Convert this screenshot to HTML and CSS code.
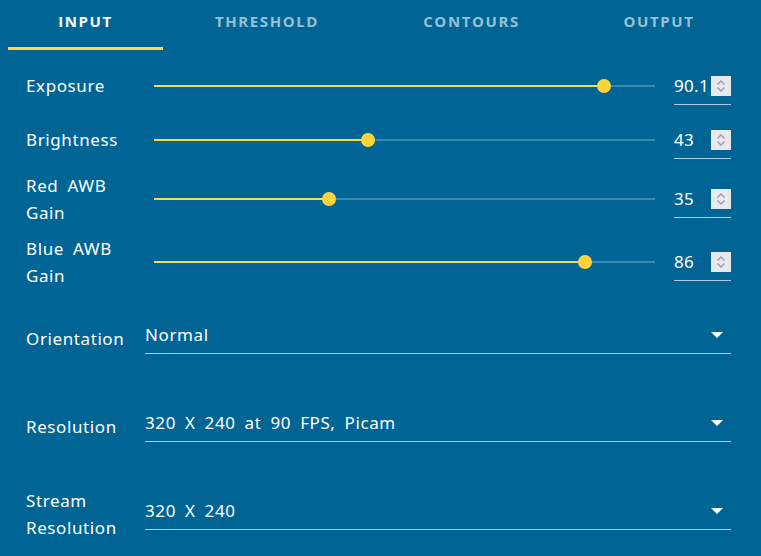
FILE: index.html
```html
<!DOCTYPE html>
<html>
<head>
<meta charset="utf-8">
<link rel="stylesheet" href="styles.css">
</head>
<body>
<div class="page">
  <nav class="tabs">
    <div class="tab active">Input</div>
    <div class="tab">Threshold</div>
    <div class="tab">Contours</div>
    <div class="tab">Output</div>
  </nav>
  <div class="content">
    <div class="row r1">
      <div class="label">Exposure</div>
      <div class="slider"><div class="track"><div class="fill" style="width:89.8%"></div><div class="thumb" style="left:89.8%"></div></div></div>
      <div class="num"><span class="val">90.1</span><span class="spin"><svg width="20" height="20" viewBox="0 0 20 20"><path d="M6.5 8.5 L10 5 L13.5 8.5 M6.5 11.5 L10 15 L13.5 11.5" fill="none" stroke="#9b9aa8" stroke-width="1.3"/></svg></span></div>
    </div>
    <div class="row r2">
      <div class="label">Brightness</div>
      <div class="slider"><div class="track"><div class="fill" style="width:42.7%"></div><div class="thumb" style="left:42.7%"></div></div></div>
      <div class="num"><span class="val">43</span><span class="spin"><svg width="20" height="20" viewBox="0 0 20 20"><path d="M6.5 8.5 L10 5 L13.5 8.5 M6.5 11.5 L10 15 L13.5 11.5" fill="none" stroke="#9b9aa8" stroke-width="1.3"/></svg></span></div>
    </div>
    <div class="row r3">
      <div class="label two">Red AWB<br>Gain</div>
      <div class="slider"><div class="track"><div class="fill" style="width:35%"></div><div class="thumb" style="left:35%"></div></div></div>
      <div class="num"><span class="val">35</span><span class="spin"><svg width="20" height="20" viewBox="0 0 20 20"><path d="M6.5 8.5 L10 5 L13.5 8.5 M6.5 11.5 L10 15 L13.5 11.5" fill="none" stroke="#9b9aa8" stroke-width="1.3"/></svg></span></div>
    </div>
    <div class="row r4">
      <div class="label two">Blue AWB<br>Gain</div>
      <div class="slider"><div class="track"><div class="fill" style="width:86%"></div><div class="thumb" style="left:86%"></div></div></div>
      <div class="num"><span class="val">86</span><span class="spin"><svg width="20" height="20" viewBox="0 0 20 20"><path d="M6.5 8.5 L10 5 L13.5 8.5 M6.5 11.5 L10 15 L13.5 11.5" fill="none" stroke="#9b9aa8" stroke-width="1.3"/></svg></span></div>
    </div>
    <div class="srow first">
      <div class="slabel">Orientation</div>
      <div class="select"><span class="stext">Normal</span><svg class="arrow" width="12" height="6" viewBox="0 0 12 6"><path d="M0 0 H12 L6 6 Z" fill="#fff"/></svg></div>
    </div>
    <div class="srow">
      <div class="slabel">Resolution</div>
      <div class="select"><span class="stext">320 X 240 at 90 FPS, Picam</span><svg class="arrow" width="12" height="6" viewBox="0 0 12 6"><path d="M0 0 H12 L6 6 Z" fill="#fff"/></svg></div>
    </div>
    <div class="srow">
      <div class="slabel two">Stream<br>Resolution</div>
      <div class="select"><span class="stext">320 X 240</span><svg class="arrow" width="12" height="6" viewBox="0 0 12 6"><path d="M0 0 H12 L6 6 Z" fill="#fff"/></svg></div>
    </div>
  </div>
</div>
</body>
</html>
```

FILE: styles.css
```css
* { box-sizing: border-box; }
html, body { margin: 0; padding: 0; }
body {
  background: #006595;
  width: 761px;
  height: 556px;
  overflow: hidden;
  font-family: "Noto Sans", sans-serif;
  color: #fff;
}
.tabs {
  display: grid;
  grid-template-columns: 155px 208px 201px 174px;
  margin-left: 8px;
  height: 50px;
}
.tab {
  display: flex;
  align-items: center;
  justify-content: center;
  height: 50px;
  padding-bottom: 6px;
  font-family: "Open Sans", sans-serif;
  font-weight: 700;
  font-size: 15px;
  letter-spacing: 1.6px;
  text-transform: uppercase;
  color: rgba(255,255,255,0.6);
  border-bottom: 3px solid transparent;
}
.tab.active {
  color: #fff;
  border-bottom-color: #ffd843;
}
.content {
  padding: 9px 30px 0 26px;
  letter-spacing: 0.6px;
  word-spacing: 4px;
}
.row {
  display: flex;
  align-items: center;
}
.r1 { height: 54px; }
.r2 { height: 54px; }
.r3 { height: 64px; }
.r4 { height: 62px; }
.label {
  width: 128px;
  font-size: 17px;
  line-height: 27px;
  padding-bottom: 1px;
}
.slider {
  flex: 1;
}
.track {
  position: relative;
  height: 2px;
  background: #3b87b0;
}
.fill {
  height: 2px;
  background: #ffd843;
}
.thumb {
  position: absolute;
  top: 50%;
  width: 14px;
  height: 14px;
  margin: -7px 0 0 -7px;
  border-radius: 50%;
  background: #ffd43b;
}
.num {
  width: 57px;
  margin-left: 19px;
  margin-top: 9px;
  padding-bottom: 8px;
  border-bottom: 1px solid #a8cfe3;
  display: flex;
  align-items: center;
  justify-content: space-between;
}
.val {
  font-size: 17px;
  line-height: 20px;
  letter-spacing: 0.3px;
}
.spin {
  width: 20px;
  height: 20px;
  background: #e9e9ed;
  display: block;
}
.spin svg { display: block; }
.srow {
  display: flex;
  align-items: center;
  height: 88px;
}
.srow.first { margin-top: 1px; }
.slabel {
  width: 119px;
  font-size: 17px;
  line-height: 27px;
}
.select {
  flex: 1;
  display: flex;
  align-items: center;
  justify-content: space-between;
  height: 31px;
  padding: 0 8px 6px 0;
  border-bottom: 1px solid #a8cfe3;
}
.stext {
  font-size: 17px;
  line-height: 24px;
}
.arrow { display: block; }
```
